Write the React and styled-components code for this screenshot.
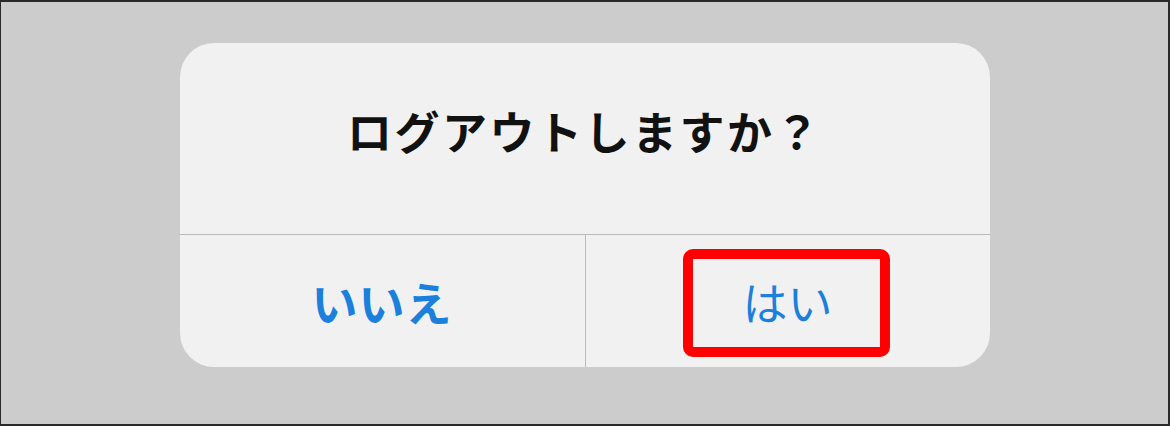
import React from 'react';
import styled, { createGlobalStyle } from 'styled-components';

const GlobalStyle = createGlobalStyle`
  html, body {
    margin: 0;
    padding: 0;
  }
  body {
    font-family: "Noto Sans CJK JP", "Noto Sans", sans-serif;
  }
`;

const Screen = styled.div`
  box-sizing: border-box;
  width: 1170px;
  height: 426px;
  background-color: #cccccc;
  border: 2px solid #2a2a2a;
  border-left-width: 1px;
  display: flex;
  justify-content: center;
  align-items: flex-start;
  padding-top: 41px;
`;

const Alert = styled.div`
  width: 810px;
  height: 324px;
  background-color: #f1f1f1;
  border-radius: 34px;
  display: flex;
  flex-direction: column;
  overflow: hidden;
`;

const Message = styled.div`
  height: 192px;
  border-bottom: 1px solid #b9b9b9;
  display: flex;
  justify-content: center;
  align-items: center;
  padding-bottom: 16px;
  box-sizing: border-box;
`;

const Title = styled.h1`
  margin: 0;
  font-size: 45px;
  font-weight: 700;
  letter-spacing: 2.5px;
  color: #111111;
  line-height: 1;
`;

const Actions = styled.div`
  flex: 1;
  display: grid;
  grid-template-columns: 1fr 1fr;
`;

const ActionButton = styled.button`
  position: relative;
  border: none;
  background: transparent;
  font-family: inherit;
  font-size: ${(p) => (p.$bold ? '46px' : '45px')};
  letter-spacing: ${(p) => (p.$bold ? '1px' : '0')};
  line-height: 1;
  color: #1b7fdc;
  font-weight: ${(p) => (p.$bold ? 700 : 400)};
  display: flex;
  justify-content: center;
  align-items: center;
  padding: 0;
  & + & {
    border-left: 1px solid #b9b9b9;
  }
`;

const Highlight = styled.span`
  position: absolute;
  left: 97px;
  top: 14px;
  width: 207px;
  height: 108px;
  box-sizing: border-box;
  border: 10px solid #ff0000;
  border-radius: 10px;
  pointer-events: none;
`;

export default function App() {
  return (
    <>
      <GlobalStyle />
      <Screen>
        <Alert>
          <Message>
            <Title>ログアウトしますか？</Title>
          </Message>
          <Actions>
            <ActionButton $bold>いいえ</ActionButton>
            <ActionButton>
              はい
              <Highlight />
            </ActionButton>
          </Actions>
        </Alert>
      </Screen>
    </>
  );
}
